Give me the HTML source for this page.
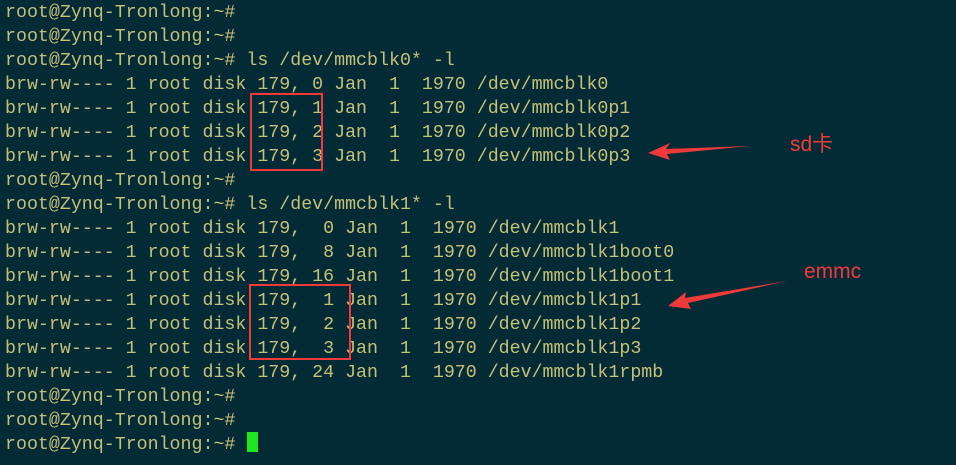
<!DOCTYPE html>
<html><head><meta charset="utf-8"><style>
html,body{margin:0;padding:0;}
body{width:956px;height:465px;background:#022b36;overflow:hidden;position:relative;}
pre{position:absolute;left:5px;top:1px;margin:0;font-family:"Liberation Mono",monospace;font-size:18.3px;line-height:24px;color:#c9bf79;}
.box{position:absolute;border:2px solid #f03a3a;}
.lbl{position:absolute;color:#f03a3a;font-family:"Liberation Sans","Noto Sans CJK SC",sans-serif;font-size:21px;}
.cur{position:absolute;left:247px;top:432px;width:11px;height:20px;background:#1ee61e;}
</style></head><body>
<pre>root@Zynq-Tronlong:~#
root@Zynq-Tronlong:~#
root@Zynq-Tronlong:~# ls /dev/mmcblk0* -l
brw-rw---- 1 root disk 179, 0 Jan  1  1970 /dev/mmcblk0
brw-rw---- 1 root disk 179, 1 Jan  1  1970 /dev/mmcblk0p1
brw-rw---- 1 root disk 179, 2 Jan  1  1970 /dev/mmcblk0p2
brw-rw---- 1 root disk 179, 3 Jan  1  1970 /dev/mmcblk0p3
root@Zynq-Tronlong:~#
root@Zynq-Tronlong:~# ls /dev/mmcblk1* -l
brw-rw---- 1 root disk 179,  0 Jan  1  1970 /dev/mmcblk1
brw-rw---- 1 root disk 179,  8 Jan  1  1970 /dev/mmcblk1boot0
brw-rw---- 1 root disk 179, 16 Jan  1  1970 /dev/mmcblk1boot1
brw-rw---- 1 root disk 179,  1 Jan  1  1970 /dev/mmcblk1p1
brw-rw---- 1 root disk 179,  2 Jan  1  1970 /dev/mmcblk1p2
brw-rw---- 1 root disk 179,  3 Jan  1  1970 /dev/mmcblk1p3
brw-rw---- 1 root disk 179, 24 Jan  1  1970 /dev/mmcblk1rpmb
root@Zynq-Tronlong:~#
root@Zynq-Tronlong:~#
root@Zynq-Tronlong:~# </pre>
<div class="box" style="left:250px;top:93px;width:69px;height:74px;"></div>
<div class="box" style="left:249px;top:284px;width:98px;height:72px;"></div>
<div class="lbl" style="left:790px;top:128px;">sd卡</div>
<div class="lbl" style="left:804px;top:260px;">emmc</div>
<svg width="956" height="465" style="position:absolute;left:0;top:0">
<polygon points="750,146 666,149 670,143 648,153 670,160 667,154" fill="#f03a3a"/>
<polygon points="787,281 685,298 686,292 668,306 691,309 688,303" fill="#f03a3a"/>
</svg>
<div class="cur"></div>
</body></html>
